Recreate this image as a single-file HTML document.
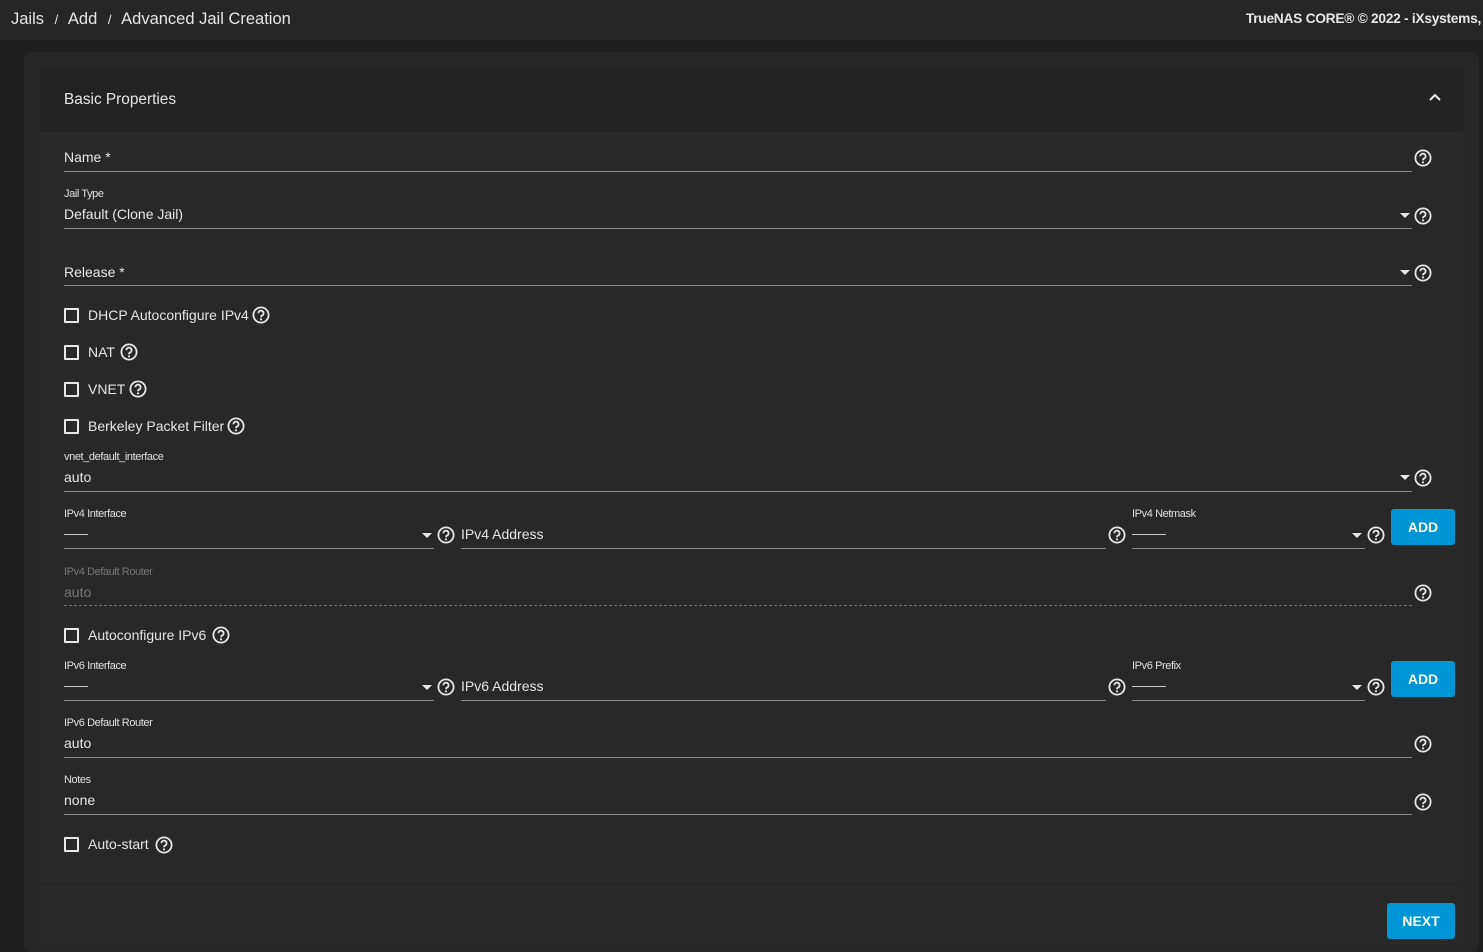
<!DOCTYPE html>
<html><head><style>
*{margin:0;padding:0;box-sizing:border-box}
body{width:1483px;height:944px;background:#1e1e1e;font-family:"Liberation Sans",sans-serif;color:#e6e6e6;position:relative;overflow:hidden}
.a{position:absolute}
.t{position:absolute;font-size:14px;line-height:18px;white-space:nowrap;letter-spacing:0}
.s{position:absolute;font-size:11px;line-height:13px;white-space:nowrap;letter-spacing:-0.4px;color:#e0e0e0}
.ln{position:absolute;height:1px;background:#8a8a8a}
.cb{position:absolute;width:15px;height:15px;border:2px solid #e8e8e8;border-radius:1px}
.dd{position:absolute;width:0;height:0;border-left:5px solid transparent;border-right:5px solid transparent;border-top:5px solid #e6e6e6}
.btn{position:absolute;background:#0095d5;color:#fff;font-weight:bold;font-size:14px;text-align:center;border-radius:3px}
</style></head><body>
<svg width="0" height="0" style="position:absolute"><defs><g id="h"><circle cx="9" cy="9" r="7.6" fill="none" stroke="#e6e6e6" stroke-width="1.8"/><path d="M6.4 7.2a2.6 2.6 0 1 1 3.6 2.4c-.8.4-1 .8-1 1.7" fill="none" stroke="#e6e6e6" stroke-width="1.8"/><circle cx="9" cy="13.3" r="1.1" fill="#e6e6e6"/></g></defs></svg>
<div class="a" style="left:0;top:0;width:1483px;height:40px;background:#262626"></div>
<div class="t" style="left:11px;top:9px;font-size:16.5px;line-height:20px">Jails <span style="font-size:13px;margin:0 6px">/</span> Add <span style="font-size:13px;margin:0 6px">/</span> Advanced Jail Creation</div>
<div class="t" style="right:2px;top:10px;font-size:13.8px;font-weight:bold;letter-spacing:-0.3px">TrueNAS CORE® © 2022 - iXsystems,</div>
<div class="a" style="left:24px;top:52px;width:1455px;height:900px;background:#262626;border-radius:8px"></div>
<div class="a" style="left:40px;top:68px;width:1423px;height:64px;background:#222222;border-radius:4px 4px 0 0"></div>
<div class="a" style="left:40px;top:132px;width:1423px;height:752px;background:#282828"></div>
<div class="a" style="left:40px;top:884px;width:1423px;height:60px;background:#282828;border-top:1px solid #222"></div>
<div class="t" style="left:64px;top:91px;font-size:15.4px">Basic Properties</div>
<svg class="a" style="left:1428px;top:92px" width="14" height="10"><path d="M2 8l5-5 5 5" fill="none" stroke="#eee" stroke-width="2"/></svg>

<div class="t" style="left:64px;top:148px">Name *</div>
<div class="ln" style="left:64px;top:171px;width:1348px"></div>
<svg class="a" style="left:1414px;top:149px" width="18" height="18"><use href="#h"/></svg>

<div class="s" style="left:64px;top:188px">Jail Type</div>
<div class="t" style="left:64px;top:205px">Default (Clone Jail)</div>
<div class="ln" style="left:64px;top:228px;width:1348px"></div>
<div class="dd" style="left:1400px;top:213px"></div>
<svg class="a" style="left:1414px;top:207px" width="18" height="18"><use href="#h"/></svg>

<div class="t" style="left:64px;top:263px">Release *</div>
<div class="ln" style="left:64px;top:285px;width:1348px"></div>
<div class="dd" style="left:1400px;top:270px"></div>
<svg class="a" style="left:1414px;top:264px" width="18" height="18"><use href="#h"/></svg>

<div class="cb" style="left:64px;top:308px"></div><div class="t" style="left:88px;top:306px">DHCP Autoconfigure IPv4</div>
<svg class="a" style="left:252px;top:306px" width="18" height="18"><use href="#h"/></svg>
<div class="cb" style="left:64px;top:345px"></div><div class="t" style="left:88px;top:343px">NAT</div>
<svg class="a" style="left:120px;top:343px" width="18" height="18"><use href="#h"/></svg>
<div class="cb" style="left:64px;top:382px"></div><div class="t" style="left:88px;top:380px">VNET</div>
<svg class="a" style="left:129px;top:380px" width="18" height="18"><use href="#h"/></svg>
<div class="cb" style="left:64px;top:419px"></div><div class="t" style="left:88px;top:417px">Berkeley Packet Filter</div>
<svg class="a" style="left:227px;top:417px" width="18" height="18"><use href="#h"/></svg>

<div class="s" style="left:64px;top:451px">vnet_default_interface</div>
<div class="t" style="left:64px;top:468px">auto</div>
<div class="ln" style="left:64px;top:491px;width:1348px"></div>
<div class="dd" style="left:1400px;top:475px"></div>
<svg class="a" style="left:1414px;top:469px" width="18" height="18"><use href="#h"/></svg>

<div class="s" style="left:64px;top:508px">IPv4 Interface</div>
<div class="a" style="left:64px;top:534px;width:24px;height:1px;background:#ccc"></div>
<div class="ln" style="left:64px;top:548px;width:370px"></div>
<div class="dd" style="left:422px;top:533px"></div>
<svg class="a" style="left:437px;top:526px" width="18" height="18"><use href="#h"/></svg>
<div class="t" style="left:461px;top:525px">IPv4 Address</div>
<div class="ln" style="left:461px;top:548px;width:645px"></div>
<svg class="a" style="left:1108px;top:526px" width="18" height="18"><use href="#h"/></svg>
<div class="s" style="left:1132px;top:508px">IPv4 Netmask</div>
<div class="a" style="left:1132px;top:534px;width:34px;height:1px;background:#ccc"></div>
<div class="ln" style="left:1132px;top:548px;width:233px"></div>
<div class="dd" style="left:1352px;top:533px"></div>
<svg class="a" style="left:1367px;top:526px" width="18" height="18"><use href="#h"/></svg>
<div class="btn" style="left:1391px;top:509px;width:64px;height:36px;line-height:36px">ADD</div>

<div class="s" style="left:64px;top:566px;color:#777">IPv4 Default Router</div>
<div class="t" style="left:64px;top:583px;color:#777">auto</div>
<div class="a" style="left:64px;top:605px;width:1348px;border-top:1px dashed #777"></div>
<svg class="a" style="left:1414px;top:584px" width="18" height="18"><use href="#h"/></svg>

<div class="cb" style="left:64px;top:628px"></div><div class="t" style="left:88px;top:626px">Autoconfigure IPv6</div>
<svg class="a" style="left:212px;top:626px" width="18" height="18"><use href="#h"/></svg>

<div class="s" style="left:64px;top:660px">IPv6 Interface</div>
<div class="a" style="left:64px;top:686px;width:24px;height:1px;background:#ccc"></div>
<div class="ln" style="left:64px;top:700px;width:370px"></div>
<div class="dd" style="left:422px;top:685px"></div>
<svg class="a" style="left:437px;top:678px" width="18" height="18"><use href="#h"/></svg>
<div class="t" style="left:461px;top:677px">IPv6 Address</div>
<div class="ln" style="left:461px;top:700px;width:645px"></div>
<svg class="a" style="left:1108px;top:678px" width="18" height="18"><use href="#h"/></svg>
<div class="s" style="left:1132px;top:660px">IPv6 Prefix</div>
<div class="a" style="left:1132px;top:686px;width:34px;height:1px;background:#ccc"></div>
<div class="ln" style="left:1132px;top:700px;width:233px"></div>
<div class="dd" style="left:1352px;top:685px"></div>
<svg class="a" style="left:1367px;top:678px" width="18" height="18"><use href="#h"/></svg>
<div class="btn" style="left:1391px;top:661px;width:64px;height:36px;line-height:36px">ADD</div>

<div class="s" style="left:64px;top:717px">IPv6 Default Router</div>
<div class="t" style="left:64px;top:734px">auto</div>
<div class="ln" style="left:64px;top:757px;width:1348px"></div>
<svg class="a" style="left:1414px;top:735px" width="18" height="18"><use href="#h"/></svg>

<div class="s" style="left:64px;top:774px">Notes</div>
<div class="t" style="left:64px;top:791px">none</div>
<div class="ln" style="left:64px;top:814px;width:1348px"></div>
<svg class="a" style="left:1414px;top:793px" width="18" height="18"><use href="#h"/></svg>

<div class="cb" style="left:64px;top:837px"></div><div class="t" style="left:88px;top:835px">Auto-start</div>
<svg class="a" style="left:155px;top:836px" width="18" height="18"><use href="#h"/></svg>

<div class="btn" style="left:1387px;top:903px;width:68px;height:36px;line-height:36px">NEXT</div>
</body></html>
